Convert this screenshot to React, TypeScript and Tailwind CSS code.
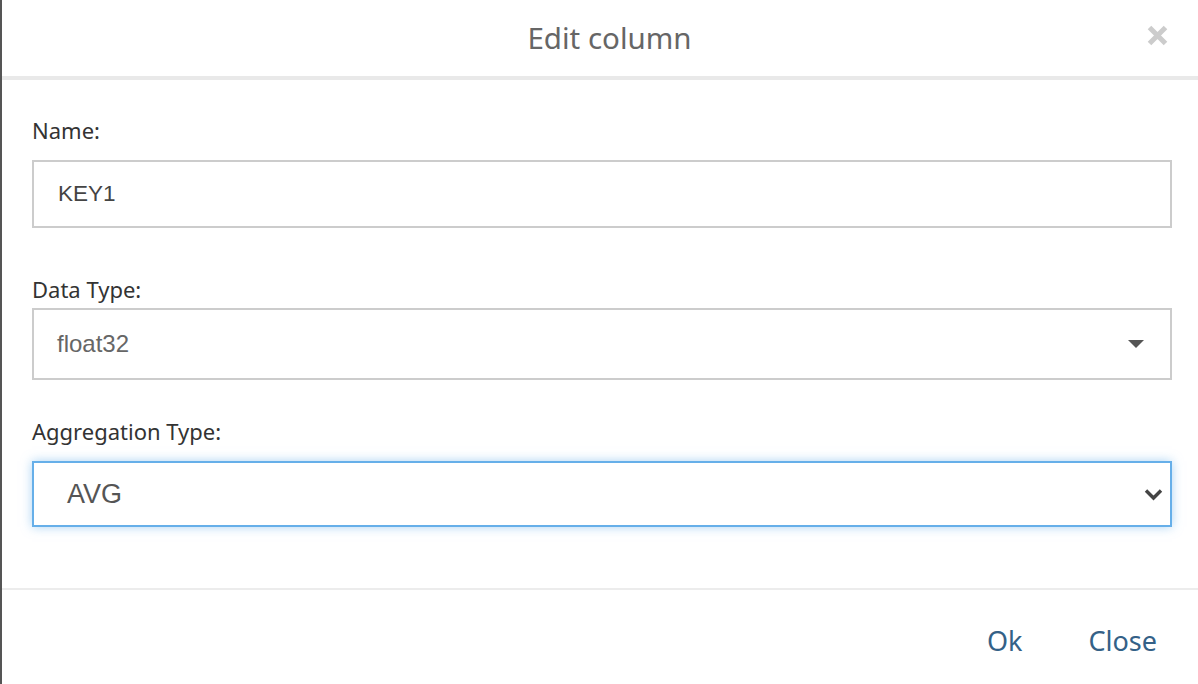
import React from "react";

export default function App() {
  const sans = { fontFamily: '"Noto Sans", "Open Sans", sans-serif' };
  const arial = { fontFamily: '"Liberation Sans", Arial, sans-serif' };
  return (
    <div className="w-[1198px] h-[684px] flex bg-white overflow-hidden" style={sans}>
      <div className="w-[2px] h-full bg-[#555555]" />
      <div className="flex-1 flex flex-col">
        {/* header */}
        <div className="relative h-[76px] flex items-center justify-center pl-[19px]">
          <div className="text-[29.5px] leading-[40px] text-[#666666]">Edit column</div>
          <button className="absolute right-[30px] top-[25px] w-[21px] h-[21px]">
            <svg viewBox="0 0 21 21" width="21" height="21">
              <path d="M2.5 2.5 L18.5 18.5 M18.5 2.5 L2.5 18.5" stroke="#cccccc" strokeWidth="5" strokeLinecap="butt" />
            </svg>
          </button>
        </div>
        <div className="h-[4px] bg-[#e9e9e9]" />

        {/* body */}
        <div className="pl-[30px] pr-[26px] pt-[35px] pb-[61px] flex flex-col">
          <label className="text-[22px] leading-[30px] text-[#333333]">Name:</label>
          <div className="mt-[15px] h-[68px] border-2 border-[#cccccc] flex items-center pl-[24px]">
            <span className="text-[22.5px] text-[#444444]" style={arial}>KEY1</span>
          </div>

          <label className="mt-[46px] text-[22px] leading-[30px] text-[#333333]">Data Type:</label>
          <div className="mt-[4px] h-[72px] border-2 border-[#cccccc] flex items-center pl-[23px] pr-[26px]">
            <span className="flex-1 text-[24px] text-[#666666]" style={arial}>float32</span>
            <svg width="16" height="8" viewBox="0 0 16 8">
              <path d="M0 0 H16 L8 8 Z" fill="#555555" />
            </svg>
          </div>

          <label className="mt-[36px] text-[22px] leading-[30px] text-[#333333]">Aggregation Type:</label>
          <div className="mt-[15px] h-[66px] border-2 border-[#66afe9] shadow-[0_0_10px_rgba(102,175,233,0.55)] flex items-center pl-[33px] pr-[7px]">
            <span className="flex-1 text-[27px] text-[#555555]" style={arial}>AVG</span>
            <svg width="19" height="13" viewBox="0 0 19 13">
              <path d="M2 2.5 L9.5 10 L17 2.5" fill="none" stroke="#444444" strokeWidth="3.4" />
            </svg>
          </div>
        </div>

        {/* footer */}
        <div className="h-[2px] bg-[#ececec]" />
        <div className="flex justify-end pt-[33px] pr-[41px] gap-[66px]">
          <button className="text-[27px] leading-[36px] text-[#346187]">Ok</button>
          <button className="text-[27px] leading-[36px] text-[#346187]">Close</button>
        </div>
      </div>
    </div>
  );
}
